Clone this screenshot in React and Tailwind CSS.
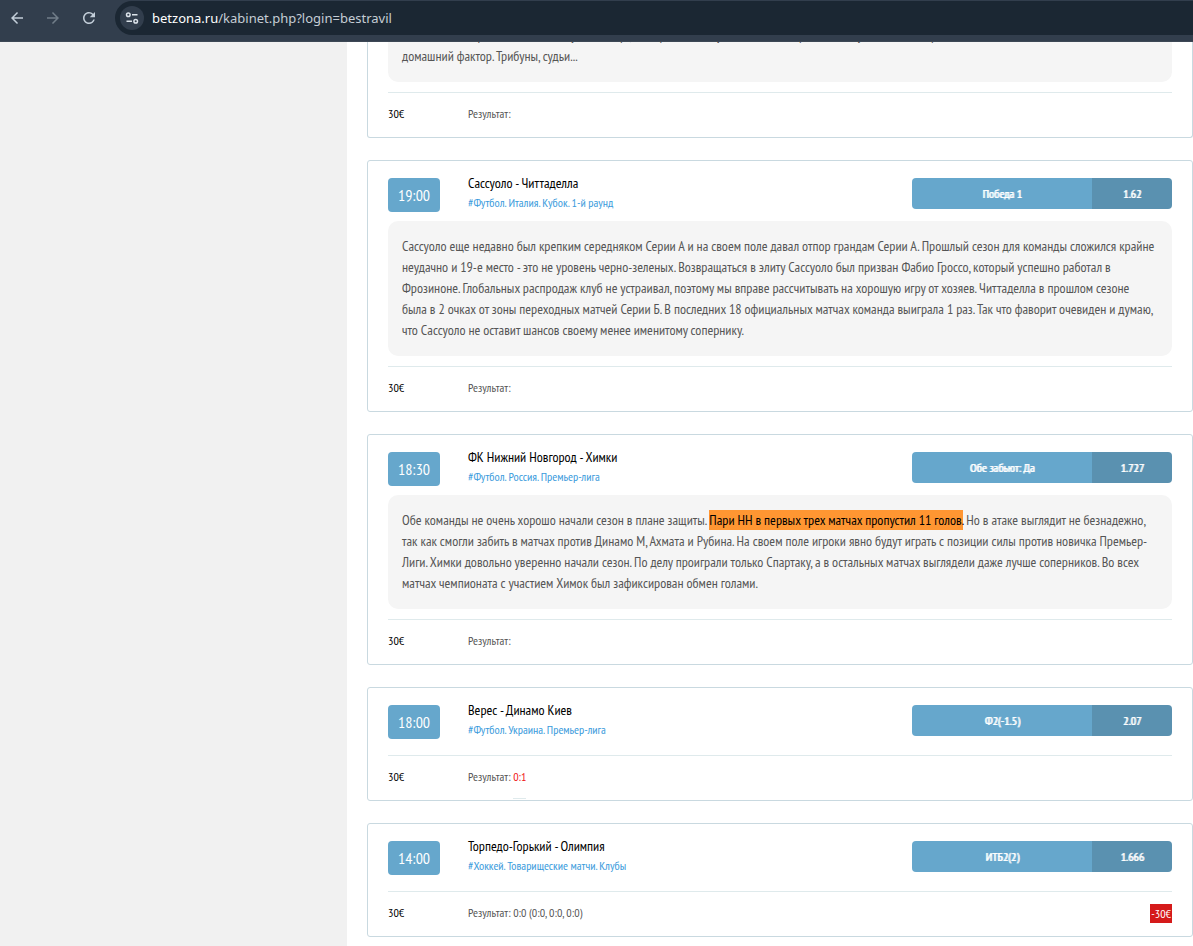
import { MdArrowBack, MdArrowForward, MdRefresh } from "react-icons/md";

const bets = [
  {
    time: "19:00",
    teams: "Сассуоло - Читтаделла",
    league: "#Футбол. Италия. Кубок. 1-й раунд",
    pick: "Победа 1",
    odds: "1.62",
    text: (
      <>
        Сассуоло еще недавно был крепким середняком Серии А и на своем поле давал отпор грандам Серии А. Прошлый сезон для команды сложился крайне<br />
        неудачно и 19-е место - это не уровень черно-зеленых. Возвращаться в элиту Сассуоло был призван Фабио Гроссо, который успешно работал в<br />
        Фрозиноне. Глобальных распродаж клуб не устраивал, поэтому мы вправе рассчитывать на хорошую игру от хозяев. Читтаделла в прошлом сезоне<br />
        была в 2 очках от зоны переходных матчей Серии Б. В последних 18 официальных матчах команда выиграла 1 раз. Так что фаворит очевиден и думаю,<br />
        что Сассуоло не оставит шансов своему менее именитому сопернику.
      </>
    ),
  },
  {
    time: "18:30",
    teams: "ФК Нижний Новгород - Химки",
    league: "#Футбол. Россия. Премьер-лига",
    pick: "Обе забьют: Да",
    odds: "1.727",
    text: (
      <>
        Обе команды не очень хорошо начали сезон в плане защиты.{" "}
        <mark className="bg-[#ff9632] py-px text-black">Пари НН в первых трех матчах пропустил 11 голов.</mark> Но в атаке выглядит не безнадежно,<br />
        так как смогли забить в матчах против Динамо М, Ахмата и Рубина. На своем поле игроки явно будут играть с позиции силы против новичка Премьер-<br />
        Лиги. Химки довольно уверенно начали сезон. По делу проиграли только Спартаку, а в остальных матчах выглядели даже лучше соперников. Во всех<br />
        матчах чемпионата с участием Химок был зафиксирован обмен голами.
      </>
    ),
  },
  {
    time: "18:00",
    teams: "Верес - Динамо Киев",
    league: "#Футбол. Украина. Премьер-лига",
    pick: "Ф2(-1.5)",
    odds: "2.07",
    live: "0:1",
  },
  {
    time: "14:00",
    teams: "Торпедо-Горький - Олимпия",
    league: "#Хоккей. Товарищеские матчи. Клубы",
    pick: "ИТБ2(2)",
    odds: "1.666",
    result: "0:0 (0:0, 0:0, 0:0)",
    profit: "-30€",
  },
];

function BrowserBar() {
  return (
    <header className="flex h-[42px] items-start border-b border-[#3d4855] bg-[#323e4d] pt-px font-['Noto_Sans',sans-serif]">
      <nav className="flex h-[34px] w-[115px] shrink-0 items-center gap-[18px] pl-2 text-[#c3ced9]">
        <button type="button" aria-label="Назад"><MdArrowBack size={18} /></button>
        <button type="button" aria-label="Вперед" className="text-[#717d89]"><MdArrowForward size={18} /></button>
        <button type="button" aria-label="Обновить"><MdRefresh size={18} /></button>
      </nav>
      <div className="flex h-[34px] flex-1 items-center gap-2 rounded-l-full bg-[#1b2733] pl-[5px]">
        <button type="button" aria-label="Сведения о сайте" className="flex size-6 items-center justify-center rounded-full bg-[#323e4d]">
          <svg width="14" height="14" viewBox="0 0 14 14" fill="none" stroke="#dce3ea" strokeWidth="1.5">
            <circle cx="3.3" cy="3.7" r="1.8" />
            <path d="M7 3.7h5.5M1.5 10.3H7" />
            <circle cx="10.7" cy="10.3" r="1.8" />
          </svg>
        </button>
        <p className="text-[13px] leading-5 whitespace-nowrap text-[#c5cdd5]">
          <span className="text-white">betzona.ru</span>/kabinet.php?login=bestravil
        </p>
      </div>
    </header>
  );
}

function CardFooter({ result, live, profit }) {
  return (
    <div className="mt-2.5 flex h-[45px] items-center border-t border-[#dfeaec] pb-0.5 text-xs">
      <span className="w-20 shrink-0 text-black">30€</span>
      <span className="flex-1 text-[#555]">
        Результат: {result}
        {live && <a href="#live" className="border-b border-[#dfeaec] pb-3.5 text-[#f01414]">{live}</a>}
      </span>
      {profit && <span className="bg-[#d51a1a] px-px leading-[19px] text-white">{profit}</span>}
    </div>
  );
}

function Description({ children }) {
  return (
    <p className="rounded-[10px] bg-[#f5f5f5] px-3.5 py-[15px] text-sm leading-[21px] whitespace-nowrap text-[#555]">
      {children}
    </p>
  );
}

function BetCard({ bet }) {
  return (
    <article className="rounded-[3px] border border-[#c9d9e0] px-5 pt-3">
      <div className={bet.text ? "flex h-12 items-start" : "flex h-[45px] items-start"}>
        <div className="w-20 shrink-0 pt-[5px]">
          <time className="block w-[52px] rounded bg-[#66a7cc] text-center text-base leading-[34px] text-white">{bet.time}</time>
        </div>
        <div className="flex-1">
          <h2 className="text-sm leading-5 text-black">{bet.teams}</h2>
          <a href="#league" className="block text-xs leading-5 text-[#3a9bdc]">{bet.league}</a>
        </div>
        <div className="mt-[5px] flex w-[260px] overflow-hidden rounded text-center text-xs leading-[31px] text-white [text-shadow:1px_0_currentColor]">
          <span className="flex-1 bg-[#66a7cc]">{bet.pick}</span>
          <span className="w-20 bg-[#5a91b0]">{bet.odds}</span>
        </div>
      </div>
      {bet.text ? <Description>{bet.text}</Description> : null}
      <CardFooter result={bet.result} live={bet.live} profit={bet.profit} />
    </article>
  );
}

export default function App() {
  return (
    <div className="flex min-h-screen flex-col bg-white font-['PT_Sans_Narrow','Liberation_Sans_Narrow',sans-serif]">
      <BrowserBar />
      <div className="flex flex-1">
        <aside className="w-[347px] shrink-0 bg-[#f1f1f1]" />
        <main className="flex min-w-0 flex-1 flex-col gap-[22px] overflow-hidden pb-2 pl-5">
          <article className="rounded-b-[3px] border border-t-0 border-[#c9d9e0] px-5">
            <div className="flex h-10 flex-col justify-end overflow-hidden">
              <Description>
                Обе команды провели не самый лучший старт, но игра хозяев будет заметно острее. Поэтому в этом матче решает<br />
                домашний фактор. Трибуны, судьи...
              </Description>
            </div>
            <CardFooter />
          </article>
          {bets.map((bet) => (
            <BetCard key={bet.time} bet={bet} />
          ))}
        </main>
      </div>
    </div>
  );
}
